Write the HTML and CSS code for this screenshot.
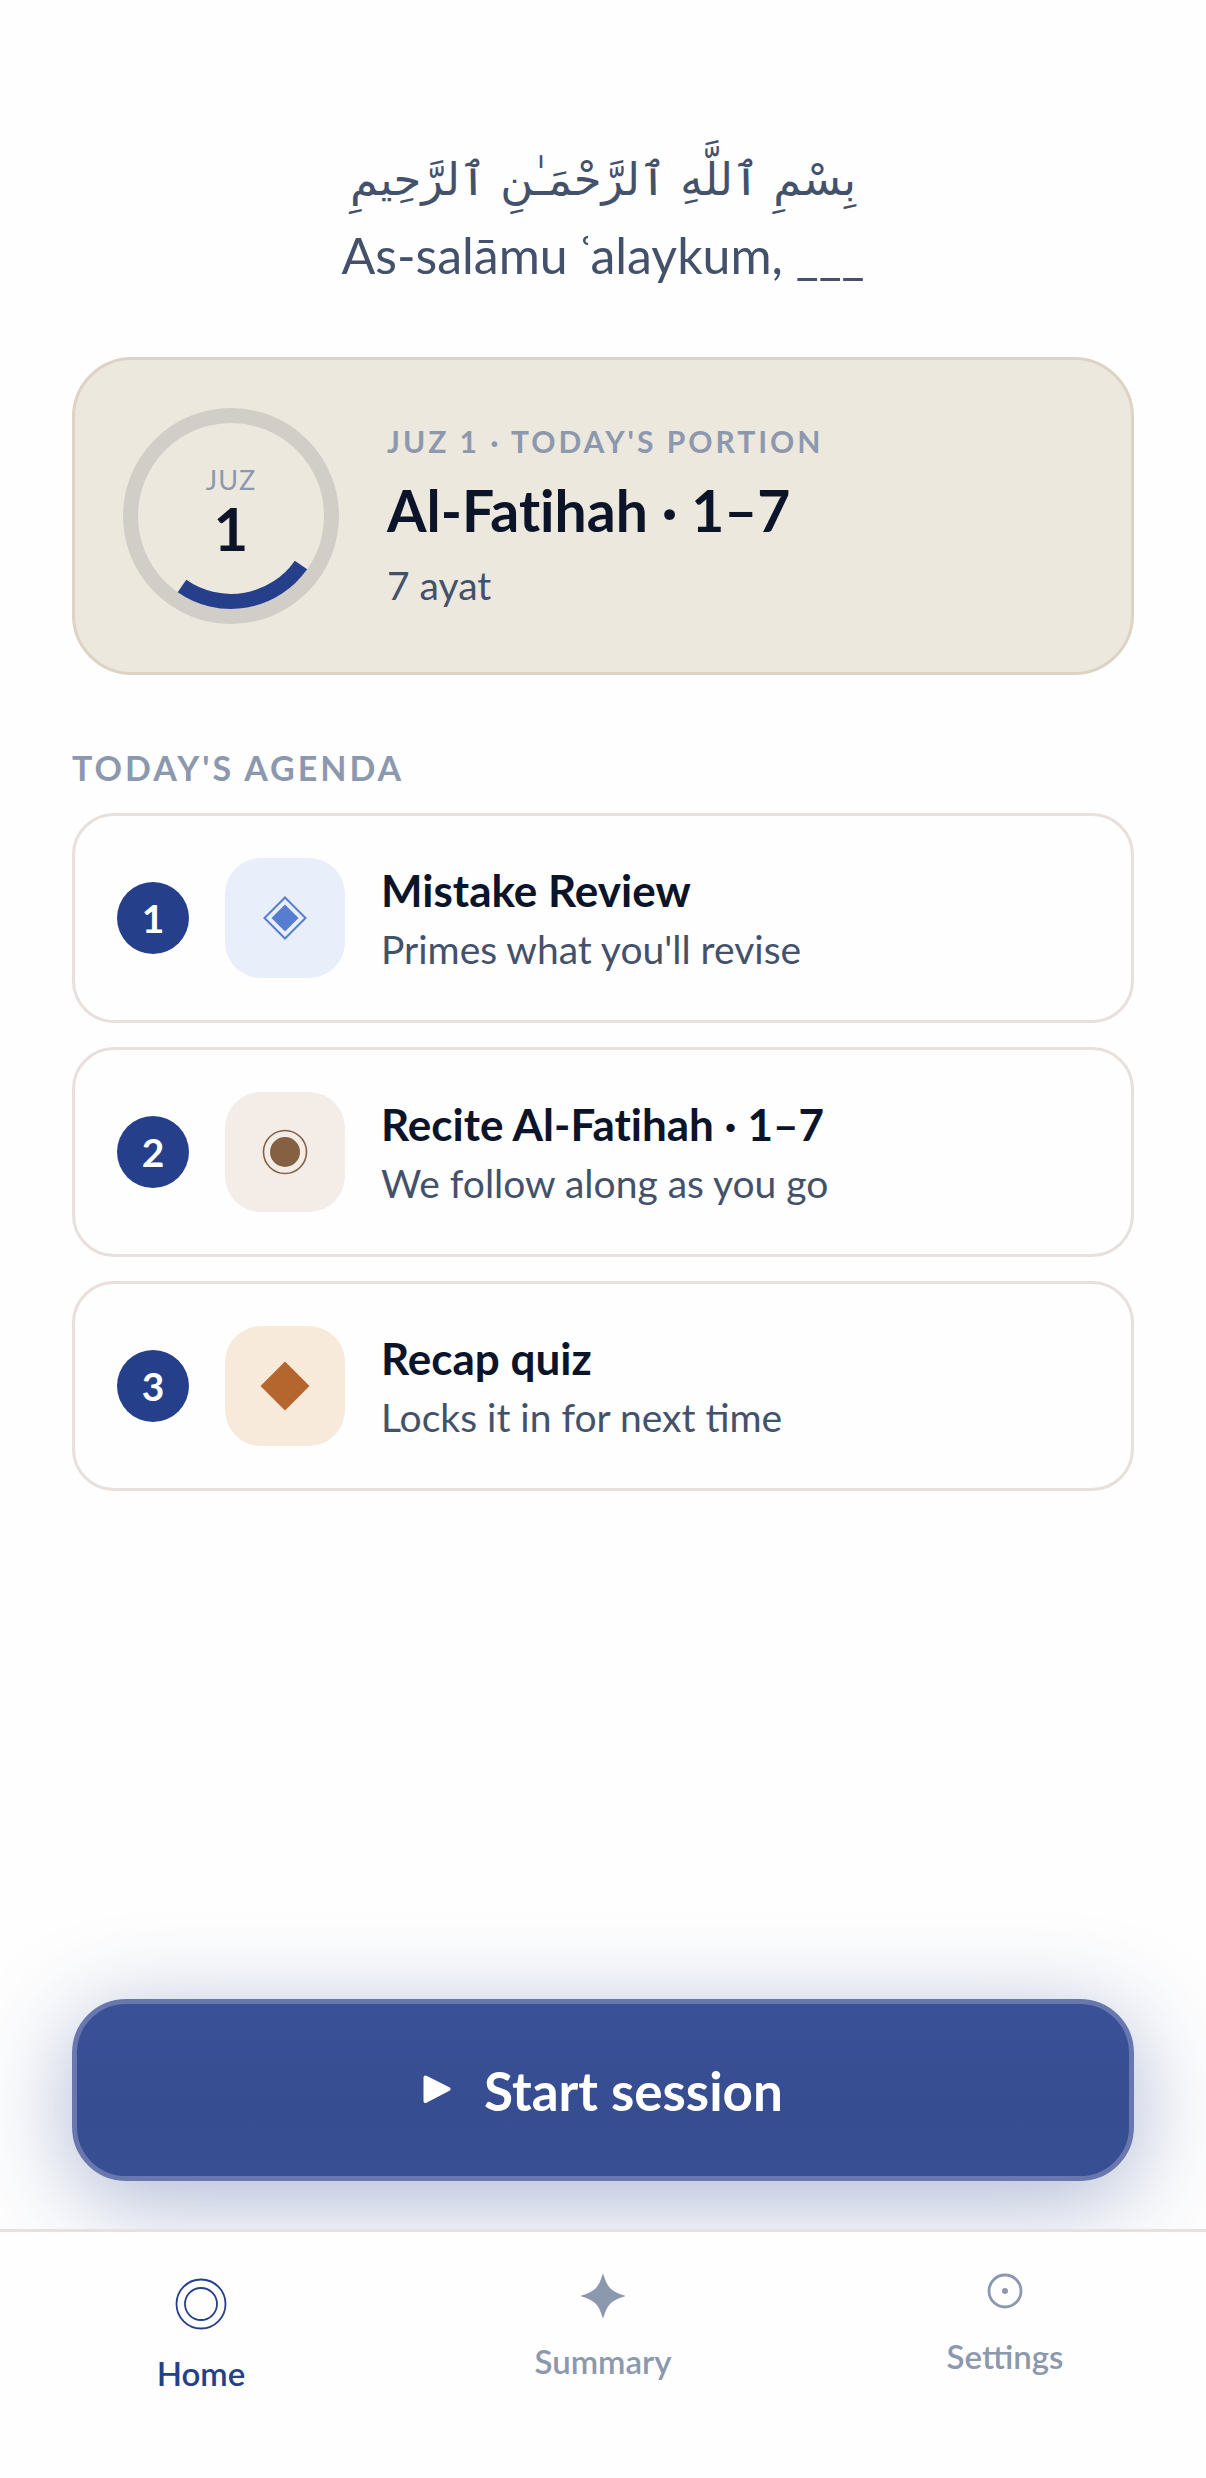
FILE: index.html
```html
<!DOCTYPE html>
<html lang="en">
<head>
    <meta charset="UTF-8">
    <meta name="viewport" content="width=device-width, initial-scale=1">
    <title>Home</title>
    <link rel="stylesheet" href="styles.css">
</head>
<body>
    <main class="page">
        <header class="greeting">
            <p class="basmala" lang="ar" dir="rtl">بِسْمِ ٱللَّهِ ٱلرَّحْمَـٰنِ ٱلرَّحِيمِ</p>
            <p class="salam">As-salāmu ʿalaykum, ___</p>
        </header>

        <section class="portion">
            <div class="ring">
                <svg class="ring-track" viewBox="0 0 216 216" fill="none" stroke-width="15" aria-hidden="true">
                    <circle cx="108" cy="108" r="100.5" stroke="#d1cec7"/>
                    <path d="M178 157 A85.5 85.5 0 0 1 59 178" stroke="#253f8b"/>
                </svg>
                <div class="ring-label">
                    <span class="ring-name">JUZ</span>
                    <span class="ring-number">1</span>
                </div>
            </div>
            <div class="portion-text">
                <p class="eyebrow">JUZ 1 · TODAY'S PORTION</p>
                <h1 class="portion-title">Al-Fatihah · 1–7</h1>
                <p class="detail">7 ayat</p>
            </div>
        </section>

        <section class="agenda">
            <h2 class="agenda-title">TODAY'S AGENDA</h2>
            <ol class="agenda-list">
                <li class="agenda-item">
                    <span class="step">1</span>
                    <span class="tile tile-review">
                        <svg width="48" height="48" viewBox="0 0 48 48" aria-hidden="true">
                            <path d="M24 3.5 L44.5 24 L24 44.5 L3.5 24 Z" fill="none" stroke="currentColor" stroke-width="2"/>
                            <path d="M24 10.5 L37.5 24 L24 37.5 L10.5 24 Z" fill="currentColor"/>
                        </svg>
                    </span>
                    <div class="agenda-text">
                        <h3 class="item-title">Mistake Review</h3>
                        <p class="detail">Primes what you'll revise</p>
                    </div>
                </li>
                <li class="agenda-item">
                    <span class="step">2</span>
                    <span class="tile tile-recite">
                        <svg width="48" height="48" viewBox="0 0 48 48" aria-hidden="true">
                            <circle cx="24" cy="24" r="21.5" fill="none" stroke="currentColor" stroke-width="1.6"/>
                            <circle cx="24" cy="24" r="15" fill="currentColor"/>
                        </svg>
                    </span>
                    <div class="agenda-text">
                        <h3 class="item-title">Recite Al-Fatihah · 1–7</h3>
                        <p class="detail">We follow along as you go</p>
                    </div>
                </li>
                <li class="agenda-item">
                    <span class="step">3</span>
                    <span class="tile tile-quiz">
                        <svg width="50" height="50" viewBox="0 0 50 50" aria-hidden="true">
                            <path d="M25 0.5 L49.5 25 L25 49.5 L0.5 25 Z" fill="currentColor"/>
                        </svg>
                    </span>
                    <div class="agenda-text">
                        <h3 class="item-title">Recap quiz</h3>
                        <p class="detail">Locks it in for next time</p>
                    </div>
                </li>
            </ol>
        </section>

        <button type="button" class="start-btn">
            <svg width="28" height="30" viewBox="0 0 28 30" aria-hidden="true">
                <path d="M2.5 2.5 L25.5 14 L2.5 26 Z" fill="currentColor" stroke="currentColor" stroke-width="4" stroke-linejoin="round"/>
            </svg>
            <span>Start session</span>
        </button>
    </main>

    <nav class="tabs">
        <a class="tab active" href="#home" aria-current="page">
            <svg width="54" height="78" viewBox="0 0 54 78" fill="none" stroke="currentColor" stroke-width="1.8" aria-hidden="true">
                <circle cx="27" cy="39" r="24.5"/>
                <circle cx="27" cy="39" r="16"/>
            </svg>
            <span>Home</span>
        </a>
        <a class="tab" href="#summary">
            <svg width="46" height="66" viewBox="0 0 46 66" fill="currentColor" aria-hidden="true">
                <path d="M23 9 C24 9 25 18 30.500 23.500 C36 29 45 30 45 31 C45 32 36 33 30.500 38.500 C25 44 24 53 23 53 C22 53 21 44 15.500 38.500 C10 33 1 32 1 31 C1 30 10 29 15.500 23.500 C21 18 22 9 23 9 Z"/>
            </svg>
            <span>Summary</span>
        </a>
        <a class="tab" href="#settings">
            <svg width="36" height="61" viewBox="0 0 36 61" aria-hidden="true">
                <circle cx="18" cy="26" r="16" fill="none" stroke="currentColor" stroke-width="2.8"/>
                <circle cx="18" cy="26" r="3" fill="currentColor"/>
            </svg>
            <span>Settings</span>
        </a>
    </nav>
</body>
</html>
```
FILE: styles.css
```css
* {
    box-sizing: border-box;
}
body {
    display: flex;
    flex-direction: column;
    min-height: 100vh;
    margin: 0;
    background: #fefefe;
    color: #0b1428;
    font-family: Lato, "DejaVu Sans", sans-serif;
}
h1, h2, h3, p, ol {
    margin: 0;
    padding: 0;
}
.page {
    flex: 1;
    display: flex;
    flex-direction: column;
    padding: 144px 72px 48px;
}

.greeting {
    margin-bottom: 72px;
    text-align: center;
    color: #43516b;
}
.basmala {
    font-family: "DejaVu Sans", sans-serif;
    font-size: 45px;
    line-height: 72px;
}
.salam {
    margin-top: 9px;
    font-size: 50px;
    line-height: 60px;
}

.portion {
    display: flex;
    align-items: center;
    gap: 48px;
    padding: 48px;
    border: 3px solid #ddd3c5;
    border-radius: 60px;
    background: #ece8dd;
}
.ring {
    display: grid;
    flex: none;
    width: 216px;
    height: 216px;
}
.ring-track,
.ring-label {
    grid-area: 1 / 1;
}
.ring-label {
    display: flex;
    flex-direction: column;
    align-items: center;
    justify-content: center;
    padding-bottom: 12px;
}
.ring-name {
    color: #8c98ae;
    font-size: 27px;
    line-height: 36px;
    letter-spacing: 1px;
}
.ring-number {
    font-size: 60px;
    font-weight: 700;
    line-height: 60px;
}
.portion-text {
    padding-bottom: 4px;
}
.eyebrow,
.agenda-title {
    color: #8c98ae;
    font-weight: 700;
    letter-spacing: 3px;
}
.eyebrow {
    font-size: 30px;
    line-height: 42px;
}
.portion-title {
    margin: 12px 0 15px;
    font-size: 57px;
    font-weight: 700;
    line-height: 72px;
    font-variant-ligatures: none;
}
.detail {
    color: #43516b;
    font-size: 39px;
    line-height: 48px;
}

.agenda {
    margin-top: 72px;
}
.agenda-title {
    font-size: 34px;
    line-height: 42px;
}
.agenda-list {
    display: flex;
    flex-direction: column;
    gap: 24px;
    margin-top: 24px;
    list-style: none;
}
.agenda-item {
    display: flex;
    align-items: center;
    gap: 36px;
    padding: 42px;
    border: 3px solid #e7e0dd;
    border-radius: 42px;
}
.step {
    display: grid;
    place-items: center;
    width: 72px;
    height: 72px;
    border-radius: 50%;
    background: #253f8b;
    color: #fff;
    font-size: 39px;
    font-weight: 700;
}
.tile {
    display: grid;
    place-items: center;
    width: 120px;
    height: 120px;
    border-radius: 36px;
}
.tile-review {
    background: #e8effa;
    color: #567dd0;
}
.tile-recite {
    background: #f4ede7;
    color: #856043;
}
.tile-quiz {
    background: #f7eadb;
    color: #b5652e;
}
.item-title {
    margin-bottom: 8px;
    font-size: 44px;
    font-weight: 700;
    line-height: 54px;
    font-variant-ligatures: none;
}

.start-btn {
    display: flex;
    align-items: center;
    justify-content: center;
    gap: 33px;
    height: 182px;
    margin-top: auto;
    border: 5px solid #6878ae;
    border-radius: 54px;
    background: linear-gradient(#3b5197, #364d92 60%, #384f94);
    box-shadow: 0 18px 96px rgba(37, 63, 139, 0.38);
    color: #fff;
    font-family: inherit;
    font-size: 53px;
    font-weight: 700;
}

.tabs {
    position: relative;
    display: grid;
    grid-template-columns: repeat(3, 1fr);
    padding: 33px 0 84px;
    border-top: 3px solid #e7e0dd;
    background: #fefefe;
}
.tab {
    display: flex;
    flex-direction: column;
    align-items: center;
    gap: 9px;
    color: #8c98ae;
    font-size: 33px;
    font-weight: 600;
    line-height: 42px;
    text-decoration: none;
}
.tab.active {
    color: #253f8b;
}
```
